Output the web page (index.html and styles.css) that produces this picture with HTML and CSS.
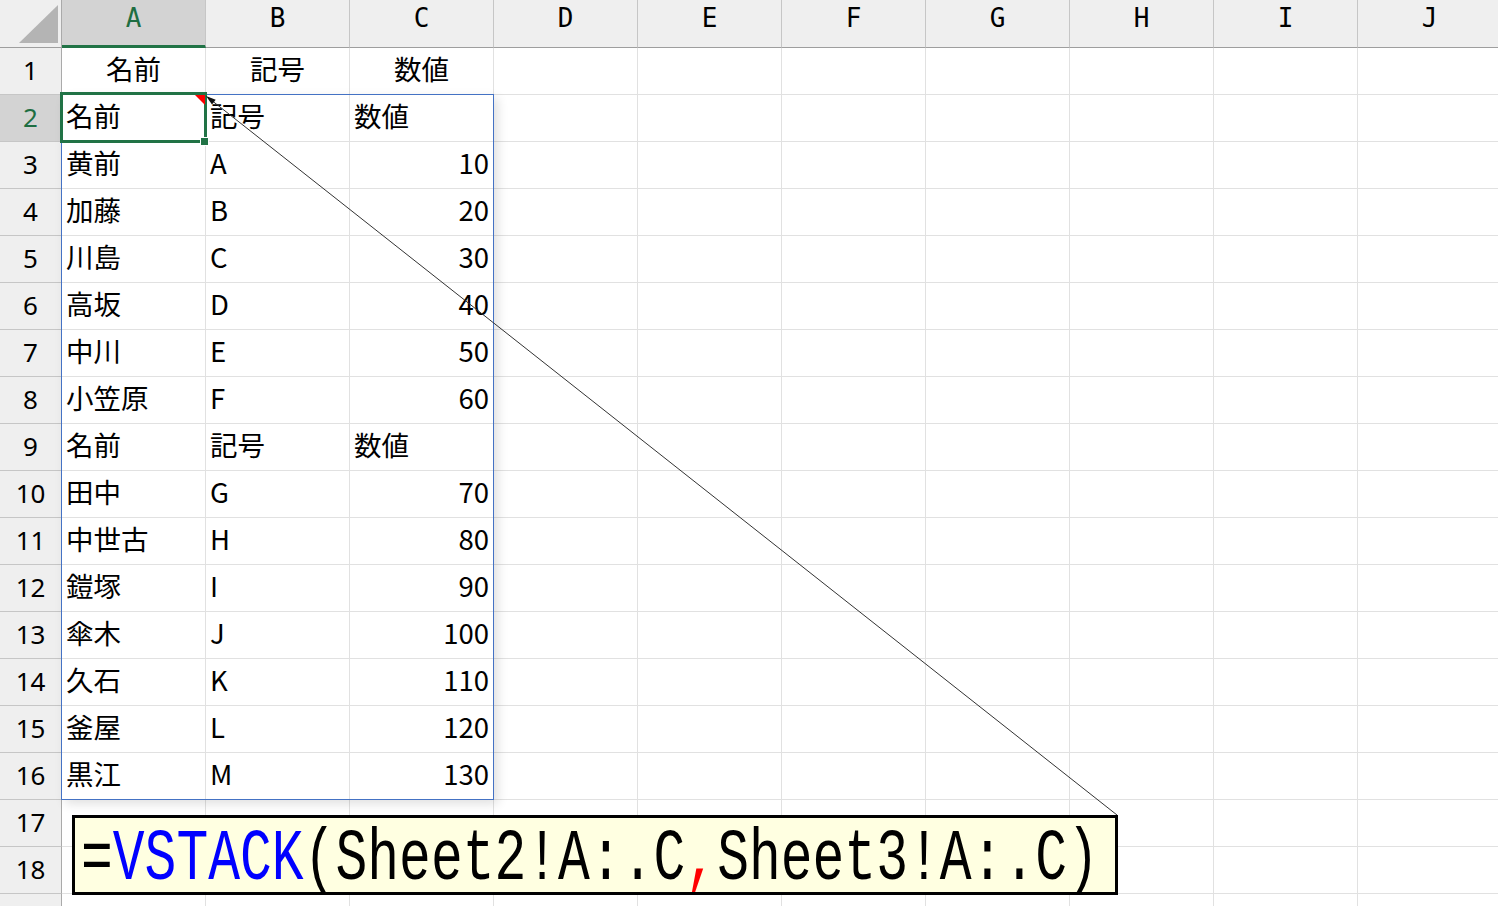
FILE: index.html
```html
<!DOCTYPE html>
<html lang="ja">
<head>
    <meta charset="UTF-8">
    <meta name="viewport" content="width=device-width, initial-scale=1.0">
    <title>VSTACK</title>
    <link rel="stylesheet" href="styles.css">
</head>
<body>
    <div class="sheet">
        <!-- column headers -->
        <div class="corner">
            <svg width="39" height="38" viewBox="0 0 39 38"><polygon points="0,38 39,38 39,0" fill="#b4b4b4"/></svg>
        </div>
        <div class="ch sel">A</div>
        <div class="ch">B</div>
        <div class="ch">C</div>
        <div class="ch">D</div>
        <div class="ch">E</div>
        <div class="ch">F</div>
        <div class="ch">G</div>
        <div class="ch">H</div>
        <div class="ch">I</div>
        <div class="ch">J</div>

        <div class="rh">1</div>
        <div class="cell ctr">名前</div><div class="cell ctr">記号</div><div class="cell ctr">数値</div>
        <div class="cell"></div><div class="cell"></div><div class="cell"></div><div class="cell"></div><div class="cell"></div><div class="cell"></div><div class="cell"></div>

        <div class="rh sel">2</div>
        <div class="cell">名前</div><div class="cell">記号</div><div class="cell">数値</div>
        <div class="cell"></div><div class="cell"></div><div class="cell"></div><div class="cell"></div><div class="cell"></div><div class="cell"></div><div class="cell"></div>

        <div class="rh">3</div>
        <div class="cell">黄前</div><div class="cell">A</div><div class="cell num">10</div>
        <div class="cell"></div><div class="cell"></div><div class="cell"></div><div class="cell"></div><div class="cell"></div><div class="cell"></div><div class="cell"></div>

        <div class="rh">4</div>
        <div class="cell">加藤</div><div class="cell">B</div><div class="cell num">20</div>
        <div class="cell"></div><div class="cell"></div><div class="cell"></div><div class="cell"></div><div class="cell"></div><div class="cell"></div><div class="cell"></div>

        <div class="rh">5</div>
        <div class="cell">川島</div><div class="cell">C</div><div class="cell num">30</div>
        <div class="cell"></div><div class="cell"></div><div class="cell"></div><div class="cell"></div><div class="cell"></div><div class="cell"></div><div class="cell"></div>

        <div class="rh">6</div>
        <div class="cell">高坂</div><div class="cell">D</div><div class="cell num">40</div>
        <div class="cell"></div><div class="cell"></div><div class="cell"></div><div class="cell"></div><div class="cell"></div><div class="cell"></div><div class="cell"></div>

        <div class="rh">7</div>
        <div class="cell">中川</div><div class="cell">E</div><div class="cell num">50</div>
        <div class="cell"></div><div class="cell"></div><div class="cell"></div><div class="cell"></div><div class="cell"></div><div class="cell"></div><div class="cell"></div>

        <div class="rh">8</div>
        <div class="cell">小笠原</div><div class="cell">F</div><div class="cell num">60</div>
        <div class="cell"></div><div class="cell"></div><div class="cell"></div><div class="cell"></div><div class="cell"></div><div class="cell"></div><div class="cell"></div>

        <div class="rh">9</div>
        <div class="cell">名前</div><div class="cell">記号</div><div class="cell">数値</div>
        <div class="cell"></div><div class="cell"></div><div class="cell"></div><div class="cell"></div><div class="cell"></div><div class="cell"></div><div class="cell"></div>

        <div class="rh">10</div>
        <div class="cell">田中</div><div class="cell">G</div><div class="cell num">70</div>
        <div class="cell"></div><div class="cell"></div><div class="cell"></div><div class="cell"></div><div class="cell"></div><div class="cell"></div><div class="cell"></div>

        <div class="rh">11</div>
        <div class="cell">中世古</div><div class="cell">H</div><div class="cell num">80</div>
        <div class="cell"></div><div class="cell"></div><div class="cell"></div><div class="cell"></div><div class="cell"></div><div class="cell"></div><div class="cell"></div>

        <div class="rh">12</div>
        <div class="cell">鎧塚</div><div class="cell">I</div><div class="cell num">90</div>
        <div class="cell"></div><div class="cell"></div><div class="cell"></div><div class="cell"></div><div class="cell"></div><div class="cell"></div><div class="cell"></div>

        <div class="rh">13</div>
        <div class="cell">傘木</div><div class="cell">J</div><div class="cell num">100</div>
        <div class="cell"></div><div class="cell"></div><div class="cell"></div><div class="cell"></div><div class="cell"></div><div class="cell"></div><div class="cell"></div>

        <div class="rh">14</div>
        <div class="cell">久石</div><div class="cell">K</div><div class="cell num">110</div>
        <div class="cell"></div><div class="cell"></div><div class="cell"></div><div class="cell"></div><div class="cell"></div><div class="cell"></div><div class="cell"></div>

        <div class="rh">15</div>
        <div class="cell">釜屋</div><div class="cell">L</div><div class="cell num">120</div>
        <div class="cell"></div><div class="cell"></div><div class="cell"></div><div class="cell"></div><div class="cell"></div><div class="cell"></div><div class="cell"></div>

        <div class="rh">16</div>
        <div class="cell">黒江</div><div class="cell">M</div><div class="cell num">130</div>
        <div class="cell"></div><div class="cell"></div><div class="cell"></div><div class="cell"></div><div class="cell"></div><div class="cell"></div><div class="cell"></div>

        <div class="rh">17</div>
        <div class="cell"></div><div class="cell"></div><div class="cell"></div>
        <div class="cell"></div><div class="cell"></div><div class="cell"></div><div class="cell"></div><div class="cell"></div><div class="cell"></div><div class="cell"></div>

        <div class="rh">18</div>
        <div class="cell"></div><div class="cell"></div><div class="cell"></div>
        <div class="cell"></div><div class="cell"></div><div class="cell"></div><div class="cell"></div><div class="cell"></div><div class="cell"></div><div class="cell"></div>

        <!-- row 19 is only a sliver at the bottom edge -->
        <div class="rh"></div>
        <div class="cell"></div><div class="cell"></div><div class="cell"></div>
        <div class="cell"></div><div class="cell"></div><div class="cell"></div><div class="cell"></div><div class="cell"></div><div class="cell"></div><div class="cell"></div>

        <!-- overlays: spill range, active cell, callout -->
        <div class="spill"></div>
        <div class="selection"></div>
        <div class="handle"></div>
        <div class="comment-mark"></div>
        <svg class="callout" width="1498" height="906">
            <line x1="208" y1="97.5" x2="1117" y2="815" stroke="#333" stroke-width="1"/>
            <polygon points="206,96 212,104.6 215.7,99.8" fill="#111"/>
        </svg>
        <div class="formula"><span class="formula-text">=<span class="fn">VSTACK</span>(Sheet2!A:.C<span class="sep">,</span>Sheet3!A:.C)</span></div>
    </div>
</body>
</html>
```

FILE: styles.css
```css
* {
    box-sizing: border-box;
}
body {
    margin: 0;
    overflow: hidden;
    background: #fff;
    color: #000;
}
.sheet {
    position: relative;
    display: grid;
    grid-template-columns: 62px repeat(10, 144px);
    grid-template-rows: 48px;
    grid-auto-rows: 47px;
    width: 1502px;
}
.corner {
    display: flex;
    justify-content: flex-end;
    align-items: flex-end;
    padding: 0 3px 4px 0;
    background: #efefef;
    border-right: 1px solid #aaa;
    border-bottom: 1px solid #9e9e9e;
}
.corner svg {
    display: block;
}
.ch {
    background: #efefef;
    border-right: 1px solid #c6c6c6;
    border-bottom: 1px solid #9e9e9e;
    text-align: center;
    font-family: "DejaVu Sans Mono", monospace;
    font-size: 26px;
    line-height: 36px;
}
.ch.sel {
    background: #d3d3d3;
    color: #1e6e42;
    border-bottom: 3px solid #217346;
}
.rh {
    background: #efefef;
    border-right: 1px solid #aaa;
    border-bottom: 1px solid #c6c6c6;
    text-align: center;
    font-family: "Noto Sans", sans-serif;
    font-size: 26px;
    line-height: 44px;
}
.rh.sel {
    background: #d3d3d3;
    color: #1e6e42;
}
.cell {
    border-right: 1px solid #e1e1e1;
    border-bottom: 1px solid #e1e1e1;
    padding: 0 4px;
    font-family: "Noto Sans CJK JP", sans-serif;
    font-size: 27.5px;
    line-height: 41px;
    white-space: nowrap;
    overflow: hidden;
}
.ctr {
    text-align: center;
}
.num {
    text-align: right;
}

/* overlays */
.spill {
    position: absolute;
    left: 61px;
    top: 94px;
    width: 433px;
    height: 706px;
    border: 1px solid #4472c4;
    box-shadow: 4px 4px 10px rgba(0, 0, 0, 0.12);
}
.selection {
    position: absolute;
    left: 60px;
    top: 92px;
    width: 147px;
    height: 51px;
    border: 3px solid #217346;
}
.handle {
    position: absolute;
    left: 200px;
    top: 137px;
    width: 9px;
    height: 9px;
    background: #217346;
    border: 1px solid #fff;
}
.comment-mark {
    position: absolute;
    left: 195px;
    top: 95px;
    width: 10px;
    height: 10px;
    background: #f00;
    clip-path: polygon(0 0, 100% 0, 100% 100%);
}
.callout {
    position: absolute;
    left: 0;
    top: 0;
    pointer-events: none;
}
.formula {
    position: absolute;
    left: 72px;
    top: 815px;
    width: 1046px;
    height: 80px;
    padding-left: 6px;
    border: 3px solid #000;
    background: #ffffe1;
    font-family: "Liberation Mono", monospace;
    font-size: 53px;
    line-height: 74px;
    white-space: nowrap;
}
.formula-text {
    display: inline-block;
    transform: translateY(5px) scaleY(1.37);
}
.fn {
    color: #0000ff;
}
.sep {
    color: #f00;
}
```
